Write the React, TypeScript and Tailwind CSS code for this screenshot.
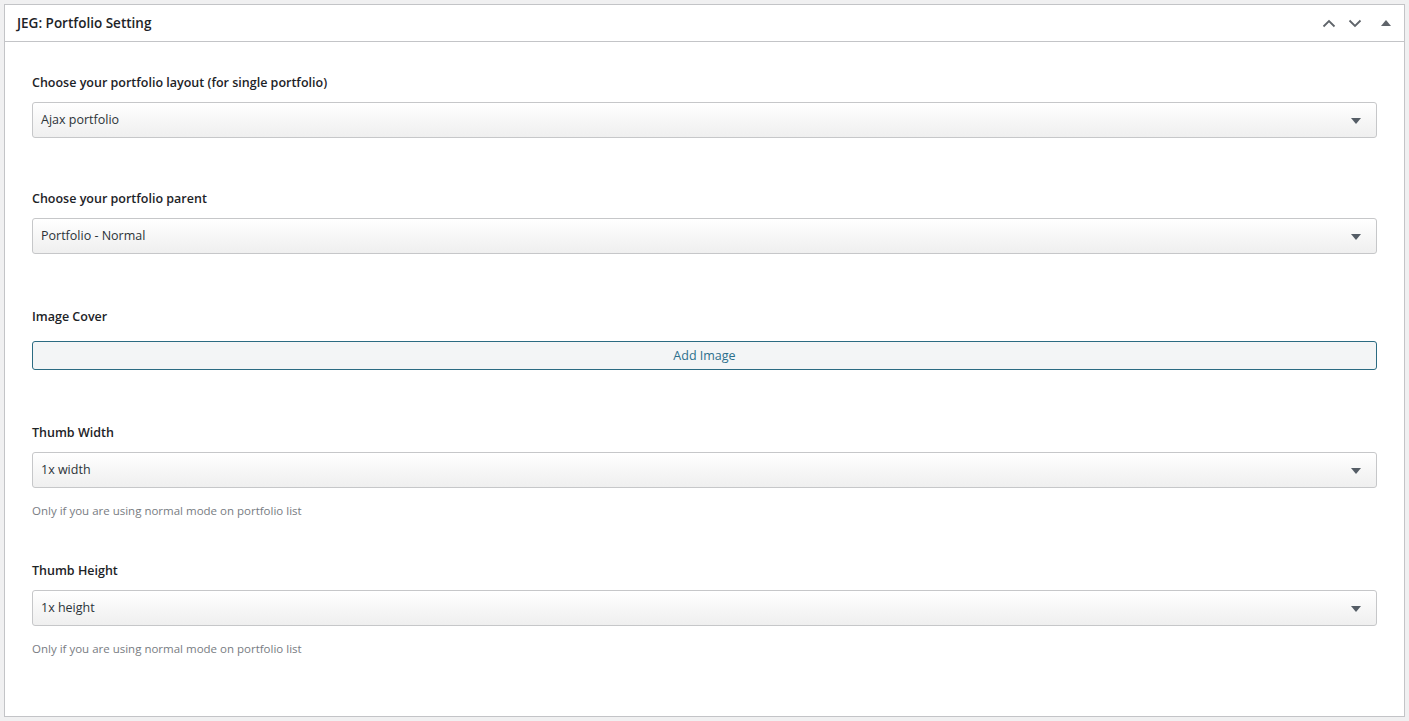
import React from 'react';

const font = { fontFamily: '"Open Sans", "Noto Sans", Arial, sans-serif' };

const Caret = () => (
  <svg width="10" height="6" viewBox="0 0 10 6" className="text-[#555d66]">
    <path d="M0 0 L10 0 L5 6 Z" fill="currentColor" />
  </svg>
);

const Select = ({ value }: { value: string }) => (
  <div className="flex items-center justify-between h-[36px] px-[8px] pr-[15px] pt-[1px] rounded-[3px] border border-[#c6c7c9] bg-gradient-to-b from-white to-[#efefef] text-[12.5px] text-[#2c3338]">
    <span>{value}</span>
    <Caret />
  </div>
);

const Label = ({ children }: { children: React.ReactNode }) => (
  <div className="pt-[1px] text-[12.5px] leading-[20px] font-semibold text-[#1d2327]">{children}</div>
);

const Hint = ({ children }: { children: React.ReactNode }) => (
  <div className="mt-[14px] text-[11.5px] leading-[18px] text-[#787c82]">{children}</div>
);

export default function App() {
  return (
    <div className="bg-[#f0f0f1] p-[4px] w-[1409px] h-[721px]" style={font}>
      <div className="bg-white border border-[#c3c4c7] h-[713px] flex flex-col">
        <div className="flex items-center justify-between h-[37px] border-b border-[#c3c4c7] pl-[12px] pr-[13px]">
          <h2 className="text-[13.5px] font-semibold text-[#1d2327]">JEG: Portfolio Setting</h2>
          <div className="flex items-center gap-[12px] text-[#5f646a]">
            <svg width="14" height="9" viewBox="0 0 14 9" className="ml-[1px]">
              <path d="M1.5 7.5 L7 2 L12.5 7.5" fill="none" stroke="currentColor" strokeWidth="1.8" />
            </svg>
            <svg width="14" height="9" viewBox="0 0 14 9">
              <path d="M1.5 1.5 L7 7 L12.5 1.5" fill="none" stroke="currentColor" strokeWidth="1.8" />
            </svg>
            <svg width="10" height="6" viewBox="0 0 10 6" className="ml-[7px]">
              <path d="M0 6 L5 0 L10 6 Z" fill="currentColor" />
            </svg>
          </div>
        </div>

        <div className="px-[27px] pt-[30px]">
          <Label>Choose your portfolio layout (for single portfolio)</Label>
          <div className="mt-[9px]">
            <Select value="Ajax portfolio" />
          </div>

          <div className="mt-[50px]">
            <Label>Choose your portfolio parent</Label>
            <div className="mt-[9px]">
              <Select value="Portfolio - Normal" />
            </div>
          </div>

          <div className="mt-[52px]">
            <Label>Image Cover</Label>
            <button className="mt-[14px] w-full h-[29px] pt-[1px] rounded-[3px] border border-[#2b6b82] bg-[#f3f5f6] text-[12.5px] text-[#2b6f8c]">
              Add Image
            </button>
          </div>

          <div className="mt-[52px]">
            <Label>Thumb Width</Label>
            <div className="mt-[9px]">
              <Select value="1x width" />
            </div>
            <Hint>Only if you are using normal mode on portfolio list</Hint>
          </div>

          <div className="mt-[40px]">
            <Label>Thumb Height</Label>
            <div className="mt-[9px]">
              <Select value="1x height" />
            </div>
            <Hint>Only if you are using normal mode on portfolio list</Hint>
          </div>
        </div>
      </div>
    </div>
  );
}
